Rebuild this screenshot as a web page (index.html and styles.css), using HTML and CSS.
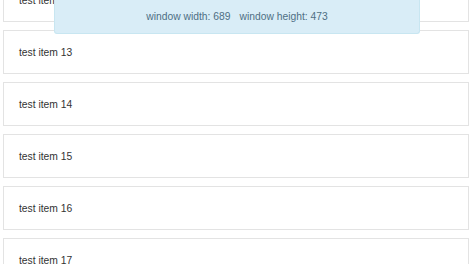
FILE: index.html
```html
<!DOCTYPE html>
<html lang="en">
<head>
  <meta charset="UTF-8">
  <title>Test list</title>
  <meta name="viewport" content="width=device-width, initial-scale=1.0">
  <link rel="stylesheet" href="styles.css">
</head>
<body>

  <!-- INFO WINDOW SIZE -->
  <div class="size-info">
    <span>window width: 689</span>
    <span>window height: 473</span>
  </div>

  <!-- LIST -->
  <ul class="list">
    <li class="list-item">test item 12</li>
    <li class="list-item">test item 13</li>
    <li class="list-item">test item 14</li>
    <li class="list-item">test item 15</li>
    <li class="list-item">test item 16</li>
    <li class="list-item">test item 17</li>
  </ul>

</body>
</html>
```

FILE: styles.css
```css
body {
  margin: 0;
  font-family: "Liberation Sans", Arial, sans-serif;
  font-size: 10.3px;
  color: #333;
  background-color: #fff;
  overflow: hidden;
}

/* LIST */
.list {
  list-style: none;
  margin: -22px 0 0;
  padding: 0 5px 0 3px;
  display: flex;
  flex-direction: column;
  gap: 8px;
}

.list-item {
  height: 42px;
  display: flex;
  align-items: center;
  padding: 0 15px;
  border: 1px solid #e3e3e3;
  background-color: #fff;
}

/* INFO */
.size-info {
  position: fixed;
  top: 0;
  left: 54px;
  width: 364px;
  height: 33px;
  display: flex;
  justify-content: center;
  align-items: center;
  gap: 9px;
  background-color: #d9edf7;
  border: 1px solid #c8e6f1;
  border-top: none;
  border-radius: 0 0 3px 3px;
  color: #4e6f84;
  z-index: 10;
}
```
